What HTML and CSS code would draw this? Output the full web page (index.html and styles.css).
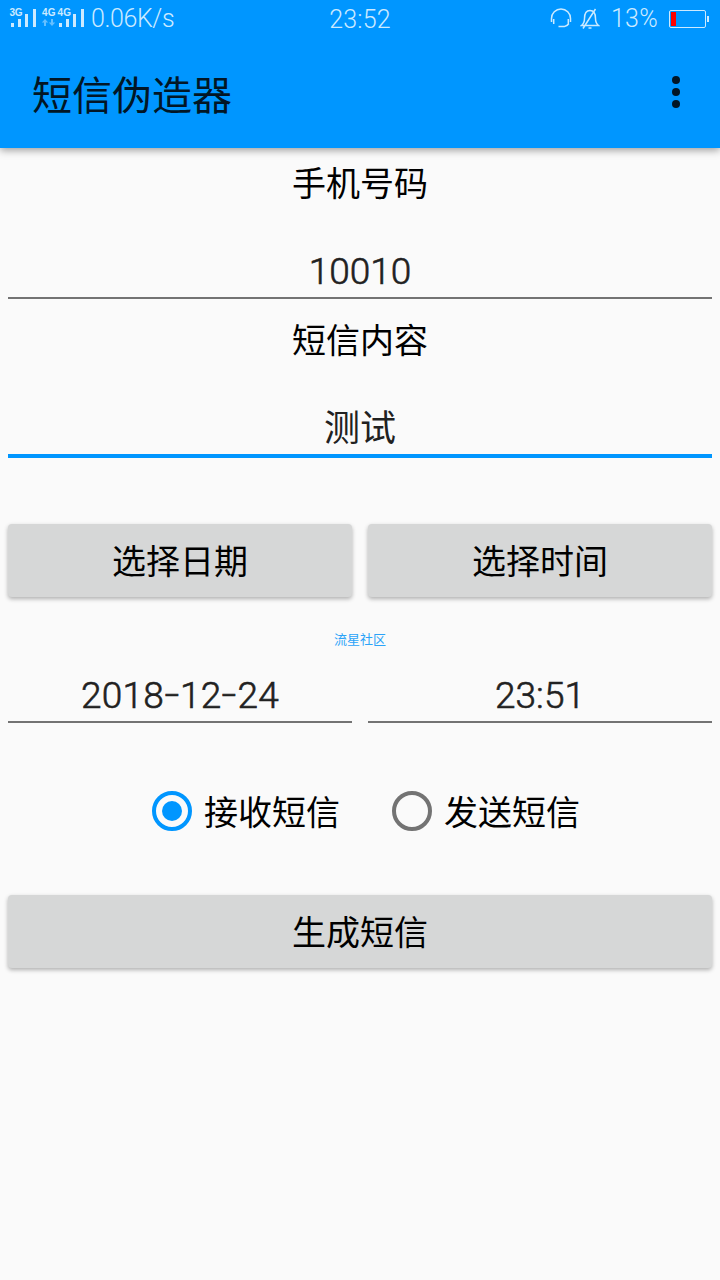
FILE: index.html
```html
<!DOCTYPE html>
<html lang="zh-CN">
<head>
    <meta charset="UTF-8">
    <meta name="viewport" content="width=device-width, initial-scale=1.0">
    <title>短信伪造器</title>
    <link rel="stylesheet" href="styles.css">
</head>
<body>

    <!-- Status bar -->
    <div class="status-bar">
        <div class="status-left">
            <svg class="signal" width="91" height="36" viewBox="0 0 91 36">
                <g class="network">
                    <text x="9.5" y="16" textLength="13">3G</text>
                    <text x="42" y="16" textLength="13.5">4G</text>
                    <text x="57.5" y="16" textLength="13.5">4G</text>
                </g>
                <g class="bars">
                    <path d="M11 23h3v4h-3zM18 19h3v8h-3zM25 14h3v13h-3zM33 9h3v18h-3z"/>
                    <path d="M59 23h3v4h-3zM66 19h3v8h-3zM73 14h3v13h-3zM81 9h3v18h-3z"/>
                </g>
                <path class="arrows" d="M45 19l3.200 3.600h-2.200V26h-2v-3.400h-2.200zM52 26l-3.200-3.600h2.200V19h2v3.400h2.200z"/>
            </svg>
            <span class="speed">0.06K/s</span>
        </div>
        <span class="clock">23:52</span>
        <div class="status-right">
            <svg width="22" height="22" viewBox="0 0 22 22">
                <path d="M1.500 14V10.500A9.500 9.500 0 0 1 20.500 10.500V14M3.700 11v5M18.300 11v5M18.800 15.500c-1 1.700-2.300 2.800-4.300 3M8.500 18.500h6"/>
            </svg>
            <svg class="bell" width="20" height="22" viewBox="0 0 20 22">
                <path d="M1.500 17.500c2.500-2 3-3.500 3-7C4.500 6 6 2.500 10 2.500s5.500 3.500 5.500 8c0 3.500.5 5 3 7zM8.500 20h3M15.500 1L3 20.500"/>
            </svg>
            <span class="percent">13%</span>
            <div class="battery"><div class="battery-level"></div></div>
            <div class="battery-tip"></div>
        </div>
    </div>

    <!-- App bar -->
    <div class="app-bar">
        <h1>短信伪造器</h1>
        <div class="menu"><i></i><i></i><i></i></div>
    </div>

    <!-- Message form -->
    <div class="content">
        <div class="label">手机号码</div>
        <div class="field phone">10010</div>
        <div class="label">短信内容</div>
        <div class="field message active">测试</div>

        <div class="row pickers">
            <button>选择日期</button>
            <button>选择时间</button>
        </div>

        <div class="community">流星社区</div>

        <div class="row">
            <div class="field date">2018<b>-</b>12<b>-</b>24</div>
            <div class="field time">23:51</div>
        </div>

        <div class="radios">
            <div class="radio checked"><span class="circle"></span><span class="radio-text">接收短信</span></div>
            <div class="radio"><span class="circle"></span><span class="radio-text">发送短信</span></div>
        </div>

        <button class="generate">生成短信</button>
    </div>

</body>
</html>
```
FILE: styles.css
```css
* {
    margin: 0;
    padding: 0;
    box-sizing: border-box;
}

body {
    height: 1280px;
    background-color: #fafafa;
    color: #000;
    font-family: Roboto, "Noto Sans CJK SC", sans-serif;
    overflow: hidden;
}

/* Status bar */
.status-bar {
    position: relative;
    z-index: 1;
    display: grid;
    grid-template-columns: 1fr auto 1fr;
    height: 40px;
    background-color: #0096ff;
    color: #cceaff;
    font-size: 25px;
    font-weight: 300;
    line-height: 38px;
}

.status-left,
.status-right {
    display: flex;
}

.network {
    fill: #cceaff;
    font: bold 10px "Liberation Sans", sans-serif;
}

.bars {
    fill: #cceaff;
}

.arrows {
    fill: #66c0ff;
}

.speed {
    letter-spacing: -0.4px;
}

.clock {
    padding-top: 1px;
    letter-spacing: 0.2px;
}

.status-right {
    justify-content: flex-end;
    align-items: center;
    height: 37px;
    padding-right: 11px;
}

.status-right svg {
    fill: none;
    stroke: #cceaff;
    stroke-width: 1.5;
}

.bell {
    margin: 0 11px 0 8px;
}

.percent {
    letter-spacing: 0.3px;
}

.battery {
    width: 37px;
    height: 18px;
    margin-left: 11px;
    padding: 1px;
    border: 1px solid #cceaff;
    border-radius: 2px;
}

.battery-level {
    width: 5px;
    height: 14px;
    background-color: #f00;
}

.battery-tip {
    width: 2px;
    height: 6px;
    margin-left: 1px;
    background-color: #cceaff;
}

/* App bar */
.app-bar {
    display: flex;
    justify-content: space-between;
    align-items: center;
    height: 108px;
    padding: 0 40px 4px 32px;
    background-color: #0096ff;
    box-shadow: 0 2px 8px rgba(0, 0, 0, 0.4);
}

.app-bar h1 {
    padding-top: 10px;
    color: #021626;
    font-size: 40px;
    font-weight: 400;
    line-height: 60px;
}

.menu {
    display: flex;
    flex-direction: column;
    gap: 4px;
}

.menu i {
    width: 8px;
    height: 8px;
    border-radius: 50%;
    background-color: #021626;
}

/* Form */
.content {
    padding: 12px 8px 0;
}

.label {
    height: 44px;
    font-size: 34px;
    line-height: 48px;
    text-align: center;
}

.field {
    flex: 1;
    border-bottom: 2px solid #737373;
    color: #212121;
    font-size: 37px;
    font-weight: 300;
    line-height: 44px;
    text-align: center;
    -webkit-text-stroke: 0.6px #212121;
}

.phone {
    height: 95px;
    margin-bottom: 18px;
    padding-top: 46px;
}

.message {
    height: 97px;
    padding-top: 46px;
    font-size: 36px;
    font-weight: 400;
    -webkit-text-stroke: 0;
}

.active {
    border-bottom: 4px solid #0096ff;
}

.row {
    display: flex;
    gap: 16px;
}

.row .field {
    height: 49px;
}

.date {
    letter-spacing: 0.2px;
}

.field b {
    display: inline-block;
    width: 16px;
    font-weight: 300;
    transform: translateY(-1px) scaleX(1.4);
}

.pickers {
    margin-top: 66px;
}

button {
    flex: 1;
    height: 73px;
    padding-top: 4px;
    border: none;
    border-radius: 4px;
    background-color: #d6d7d7;
    box-shadow: 0 2px 4px rgba(0, 0, 0, 0.3);
    color: #000;
    font-family: inherit;
    font-size: 34px;
    line-height: 69px;
}

.community {
    height: 20px;
    margin: 33px 0 24px;
    color: #2ba3f8;
    font-size: 13px;
    line-height: 20px;
    text-align: center;
}

/* Receive / send switch */
.radios {
    display: flex;
    gap: 52px;
    margin: 66px 0 62px 144px;
}

.radio {
    display: flex;
    align-items: center;
    gap: 12px;
    height: 44px;
    font-size: 34px;
    line-height: 44px;
}

.radio-text {
    padding-top: 4px;
}

.circle {
    width: 40px;
    height: 40px;
    padding: 6px;
    border: 4px solid #737373;
    border-radius: 50%;
}

.checked .circle {
    border-color: #0096ff;
    background: #0096ff content-box;
}

.generate {
    display: block;
    width: 100%;
}
```
